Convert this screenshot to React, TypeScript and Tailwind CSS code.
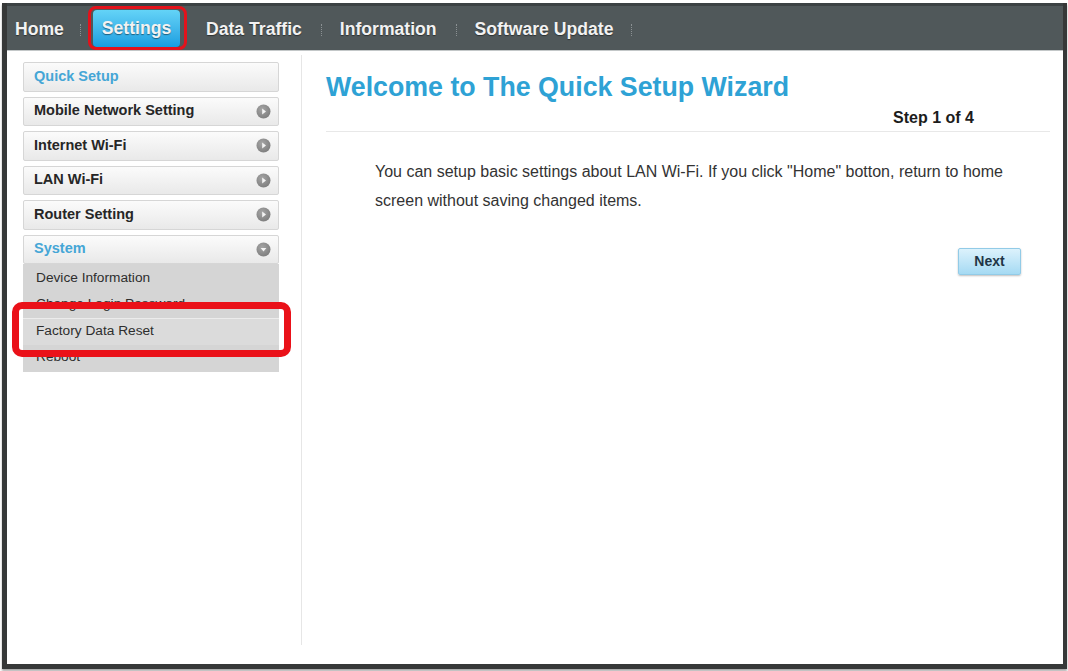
import React from "react";

const FONT = { fontFamily: '"Liberation Sans", Arial, Helvetica, sans-serif' };

function Circle({ down = false }: { down?: boolean }) {
  return (
    <svg width="15" height="15" viewBox="0 0 15 15">
      <defs>
        <radialGradient id={down ? "gd" : "gr"} cx="40%" cy="35%" r="70%">
          <stop offset="0%" stopColor="#a5a5a5" />
          <stop offset="100%" stopColor="#7d7d7d" />
        </radialGradient>
      </defs>
      <circle cx="7.5" cy="7.5" r="7" fill={`url(#${down ? "gd" : "gr"})`} />
      {down ? (
        <polygon points="4.6,6 10.4,6 7.5,9.6" fill="#f4f4f4" />
      ) : (
        <polygon points="6.2,4.6 10,7.5 6.2,10.4" fill="#f4f4f4" />
      )}
    </svg>
  );
}

function Sep() {
  return <div className="h-[12px] border-l border-dotted border-[#8b9193] mt-[3px]" />;
}

function MenuItem({ label, blue = false, icon = "right" }: { label: string; blue?: boolean; icon?: "right" | "down" | "none" }) {
  return (
    <div className="h-[29.5px] flex items-center justify-between pl-[10px] pr-[7px] border border-[#d6d6d6] rounded-[2px] bg-gradient-to-b from-[#fbfbfb] to-[#e9e9e9]">
      <span className={`text-[14.5px] font-bold ${blue ? "text-[#45a6d6]" : "text-[#262626]"}`}>{label}</span>
      {icon === "right" && <Circle />}
      {icon === "down" && <Circle down />}
    </div>
  );
}

export default function App() {
  const sub = ["Device Information", "Change Login Password", "Factory Data Reset", "Reboot"];
  return (
    <div className="relative w-[1068px] h-[671px] bg-white pt-[3px] pl-[2px] overflow-hidden" style={FONT}>
      <div className="w-[1065px] h-[666px] flex flex-col border-l-[5px] border-r-[4px] border-b-[5px] border-[#363838] shadow-[0_2px_2px_rgba(0,0,0,0.35)]">
        {/* Nav bar */}
        <div className="h-[48px] flex items-center bg-[#50585a] border-t-[3px] border-t-[#3c4244] border-b border-b-[#c3c7c8] pl-[8px] text-[17.6px] font-bold text-[#f2f2f2] [text-shadow:0_1px_1px_rgba(0,0,0,0.45)]">
          <span className="w-[48px] mt-[2px]">Home</span>
          <div className="ml-[17px]"><Sep /></div>
          <div className="ml-[12px] w-[87px] h-[37px] mt-[1px] rounded-[4px] bg-gradient-to-b from-[#63d3f7] to-[#169ee0] flex items-center justify-center">
            <span>Settings</span>
          </div>
          <span className="ml-[26px] mt-[2px]">Data Traffic</span>
          <div className="ml-[19px]"><Sep /></div>
          <span className="ml-[18px] mt-[2px]">Information</span>
          <div className="ml-[19px]"><Sep /></div>
          <span className="ml-[18px] mt-[2px]">Software Update</span>
          <div className="ml-[18px]"><Sep /></div>
        </div>

        {/* Body */}
        <div className="flex-1 flex">
          {/* Sidebar */}
          <div className="w-[295px] mt-[4px] h-[590px] border-r border-[#e6e6e6] pt-[7px] pl-[16px]">
            <div className="w-[256px] flex flex-col gap-[5px]">
              <MenuItem label="Quick Setup" blue icon="none" />
              <MenuItem label="Mobile Network Setting" />
              <MenuItem label="Internet Wi-Fi" />
              <MenuItem label="LAN Wi-Fi" />
              <MenuItem label="Router Setting" />
              <div>
                <MenuItem label="System" blue icon="down" />
                <div className="bg-[#d5d5d5] py-[1px]">
                  {sub.map((s) => (
                    <div
                      key={s}
                      className={`h-[26.5px] flex items-center pl-[13px] text-[13.7px] text-[#2e2e2e] ${s === "Factory Data Reset" ? "bg-[#dbdbdb] border-t border-[#ececec]" : ""}`}
                    >
                      {s}
                    </div>
                  ))}
                </div>
              </div>
            </div>
          </div>

          {/* Main */}
          <div className="flex-1 pl-[24px] pr-[13px]">
            <h1 className="mt-[20px] text-[26.75px] leading-[32px] font-bold text-[#2ea2d5]">Welcome to The Quick Setup Wizard</h1>
            <div className="mt-[5px] h-[20px] flex justify-end pr-[76px] text-[16px] leading-[20px] font-bold text-[#1c1c1c]">Step 1 of 4</div>
            <div className="mt-[3px] border-t border-[#e8e8e8]" />
            <p className="mt-[25px] pl-[49px] pr-[36px] text-[16px] leading-[29px] text-[#333333]">
              You can setup basic settings about LAN Wi-Fi. If you click "Home" botton, return to home screen without saving changed items.
            </p>
            <div className="mt-[33px] flex justify-end pr-[29px]">
              <div className="w-[63px] h-[27px] flex items-center justify-center rounded-[2px] border border-[#92cbe7] bg-gradient-to-b from-[#dcf2fc] to-[#a5daf3] shadow-[0_1px_2px_rgba(0,0,0,0.25)] text-[14px] font-bold text-[#1f3546]">
                Next
              </div>
            </div>
          </div>
        </div>
      </div>

      {/* Red highlight overlays */}
      <div className="absolute left-[88px] top-[6px] w-[99px] h-[44px] rounded-[8px] border-[3px] border-[#e3121b]" />
      <div className="absolute left-[12px] top-[302px] w-[279px] h-[55px] rounded-[10px] border-[7px] border-[#ea1119]" />
    </div>
  );
}
